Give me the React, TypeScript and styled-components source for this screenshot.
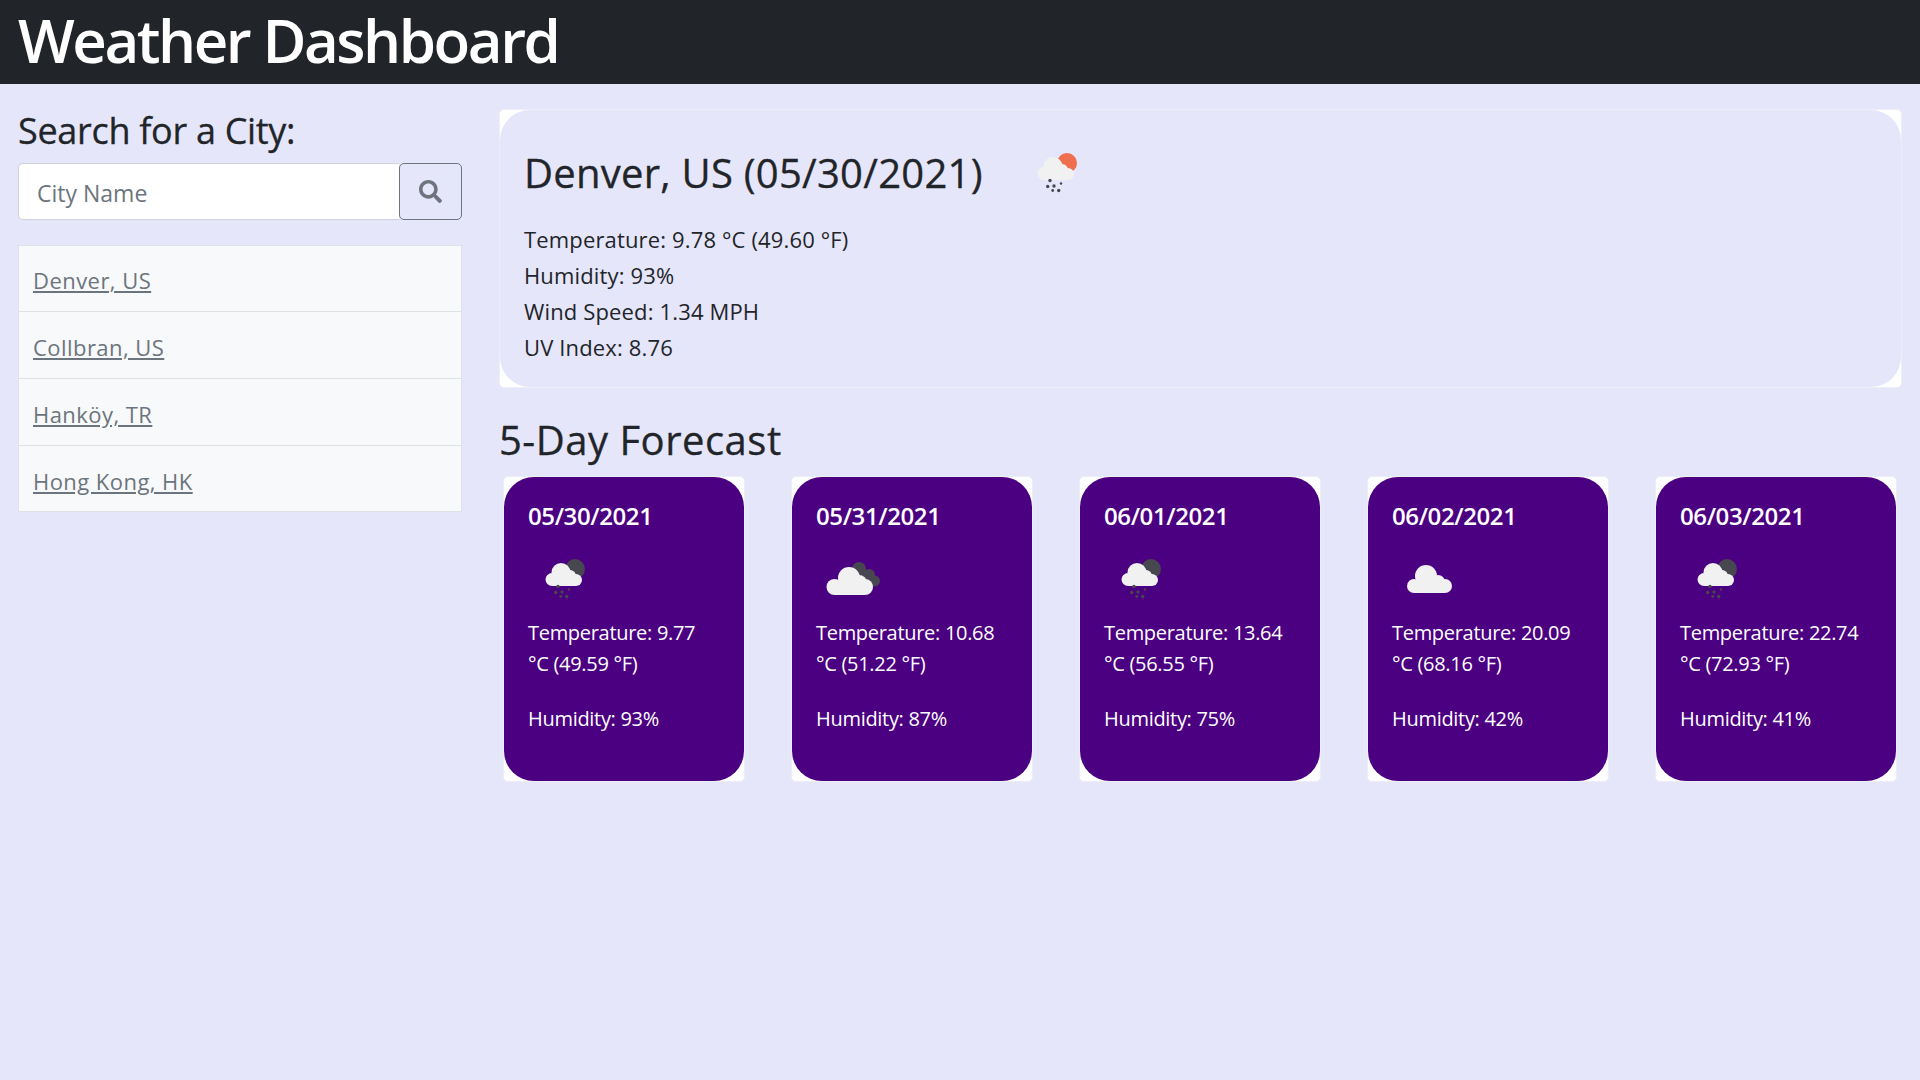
import { FC } from "react";
import styled, { createGlobalStyle } from "styled-components";
import { FaSearch } from "react-icons/fa";

const GlobalStyle = createGlobalStyle`
  html, body {
    margin: 0;
    padding: 0;
    background: #e6e6fa;
  }
  * {
    box-sizing: border-box;
  }
`;

const Page = styled.div`
  min-height: 1080px;
  background: #e6e6fa;
  color: #212529;
  font-family: "Open Sans", "Noto Sans", sans-serif;
`;

const Header = styled.header`
  height: 84px;
  background: #212529;
  padding: 0 18px 5px;
  display: flex;
  align-items: center;
`;

const Title = styled.h1`
  margin: 0;
  color: #fff;
  font-size: 60px;
  font-weight: 600;
  line-height: 1;
  letter-spacing: -2.45px;
`;

const Columns = styled.div`
  display: grid;
  grid-template-columns: 480px 1fr;
`;

const Sidebar = styled.aside`
  padding: 25px 18px 0;
`;

const SearchLabel = styled.h3`
  margin: 0 0 10px;
  font-size: 36px;
  font-weight: 500;
  line-height: 44px;
  letter-spacing: -0.3px;
  -webkit-text-stroke: 0.3px #212529;
`;

const SearchGroup = styled.form`
  display: flex;
  height: 58px;
  margin-bottom: 24px;
`;

const SearchInput = styled.input`
  flex: 1;
  min-width: 0;
  height: 57px;
  padding: 2px 18px 0;
  background: #fff;
  border: 1px solid #ced4da;
  border-right: 0;
  border-radius: 5px 0 0 5px;
  color: #212529;
  font: 400 23px "Open Sans", sans-serif;
  &::placeholder {
    color: #6c757d;
    opacity: 1;
  }
`;

const SearchButton = styled.button`
  width: 63px;
  height: 57px;
  display: flex;
  align-items: center;
  justify-content: center;
  padding: 0;
  background: transparent;
  border: 1px solid #6c757d;
  border-radius: 5px;
  color: #6c757d;
  font-size: 23px;
`;

const CityList = styled.ul`
  list-style: none;
  margin: 0;
  padding: 0;
  border: 1px solid #dee2e6;
  background: #f8f9fa;
`;

const CityItem = styled.li`
  height: 67px;
  padding: 16px 14px 0;
  font-size: 22px;
  line-height: 36px;
  letter-spacing: 0.45px;
  &:first-child {
    height: 65px;
  }
  & + & {
    padding-top: 17px;
    border-top: 1px solid #dee2e6;
  }
  &:last-child {
    height: 66px;
  }
`;

const CityLink = styled.a`
  color: #6c757d;
  text-decoration: underline;
`;

const Main = styled.main`
  padding: 25px 18px 0 19px;
`;

const TodayCard = styled.section`
  height: 279px;
  background: #fff;
  border: 1px solid #eeeef6;
  border-radius: 5px;
`;

const TodayInner = styled.div`
  height: 100%;
  padding: 24px 24px 0;
  background: #e6e6fa;
  border-radius: 30px;
`;

const TodayHeading = styled.div`
  display: flex;
  align-items: center;
  height: 70px;
  margin-bottom: 17px;
`;

const CityTitle = styled.h2`
  margin: 7px 37px 0 0;
  font-size: 40px;
  font-weight: 500;
  line-height: 48px;
  letter-spacing: 0.25px;
  -webkit-text-stroke: 0.3px #212529;
`;

const StatLine = styled.p`
  margin: 0;
  font-size: 22px;
  line-height: 36px;
  letter-spacing: 0.15px;
`;

const ForecastTitle = styled.h2`
  margin: 28px 0 12px;
  font-size: 40px;
  font-weight: 500;
  line-height: 48px;
  letter-spacing: 0.5px;
  -webkit-text-stroke: 0.3px #212529;
`;

const ForecastRow = styled.div`
  display: flex;
  justify-content: space-between;
  padding: 0 5px 0 4px;
`;

const DayCard = styled.article`
  width: 242px;
  height: 306px;
  background: #fff;
  border: 1px solid #eeeef6;
  border-radius: 5px;
`;

const DayInner = styled.div`
  height: 100%;
  padding: 24px 30px 0 24px;
  background: #4b0082;
  color: #fff;
  border-radius: 30px;
`;

const DayDate = styled.h5`
  margin: 0 0 10px;
  font-size: 24px;
  font-weight: 600;
  line-height: 29px;
  letter-spacing: -0.4px;
`;

const DayIcon = styled.div`
  margin-bottom: 7px;
`;

const DayText = styled.p`
  margin: 0 0 24px;
  font-size: 20px;
  line-height: 31px;
  letter-spacing: -0.3px;
`;

const IconSvg = styled.svg`
  display: block;
  flex: none;
  width: 70px;
  height: 70px;
`;

type IconKind = "rainSun" | "rainMoon" | "broken" | "cloud";

const RainDots: FC = () => (
  <g fill="#47474f">
    <circle cx="30" cy="46.500" r="1.7" />
    <circle cx="27.700" cy="52.500" r="1.7" />
    <circle cx="34" cy="52" r="1.7" />
    <circle cx="41" cy="49.500" r="1.2" />
    <circle cx="32.700" cy="56.500" r="1.4" />
    <circle cx="38.700" cy="56.500" r="1.7" />
  </g>
);

const WeatherIcon: FC<{ kind: IconKind }> = ({ kind }) => {
  if (kind === "cloud") {
    return (
      <IconSvg viewBox="0 0 70 70">
        <g fill="#f1f1f1">
          <circle cx="22" cy="46" r="7" />
          <circle cx="34" cy="36" r="11" />
          <circle cx="46" cy="42" r="7" />
          <circle cx="53" cy="46" r="7" />
          <rect x="22" y="42" width="31" height="11" />
        </g>
      </IconSvg>
    );
  }
  if (kind === "broken") {
    return (
      <IconSvg viewBox="0 0 70 70">
        <g fill="#47474f">
          <circle cx="43" cy="29" r="7" />
          <circle cx="53" cy="35" r="6" />
          <circle cx="58.500" cy="41" r="5.500" />
          <rect x="42" y="32" width="14" height="14" />
        </g>
        <g fill="#f1f1f1">
          <circle cx="18.500" cy="47" r="8" />
          <circle cx="33" cy="38" r="11" />
          <circle cx="43" cy="43" r="8" />
          <circle cx="49" cy="47" r="8" />
          <rect x="18.500" y="44" width="30.500" height="11" />
        </g>
      </IconSvg>
    );
  }
  return (
    <IconSvg viewBox="0 0 70 70">
      <circle cx="47" cy="29" r="10" fill={kind === "rainSun" ? "#ee6e4d" : "#47474f"} />
      <g fill="#f1f1f1">
        <circle cx="24" cy="39.500" r="6.500" />
        <circle cx="33" cy="32.500" r="9.500" />
        <circle cx="42" cy="36" r="6" />
        <circle cx="48" cy="40" r="6" />
        <rect x="24" y="38" width="24" height="8" />
      </g>
      <RainDots />
    </IconSvg>
  );
};

const cities = ["Denver, US", "Collbran, US", "Hanköy, TR", "Hong Kong, HK"];

const forecast: { date: string; icon: IconKind; c: string; f: string; humidity: number }[] = [
  { date: "05/30/2021", icon: "rainMoon", c: "9.77", f: "49.59", humidity: 93 },
  { date: "05/31/2021", icon: "broken", c: "10.68", f: "51.22", humidity: 87 },
  { date: "06/01/2021", icon: "rainMoon", c: "13.64", f: "56.55", humidity: 75 },
  { date: "06/02/2021", icon: "cloud", c: "20.09", f: "68.16", humidity: 42 },
  { date: "06/03/2021", icon: "rainMoon", c: "22.74", f: "72.93", humidity: 41 },
];

export default function App() {
  return (
    <Page>
      <GlobalStyle />
      <Header>
        <Title>Weather Dashboard</Title>
      </Header>
      <Columns>
        <Sidebar>
          <SearchLabel>Search for a City:</SearchLabel>
          <SearchGroup>
            <SearchInput placeholder="City Name" />
            <SearchButton type="button">
              <FaSearch />
            </SearchButton>
          </SearchGroup>
          <CityList>
            {cities.map((city) => (
              <CityItem key={city}>
                <CityLink href="#">{city}</CityLink>
              </CityItem>
            ))}
          </CityList>
        </Sidebar>
        <Main>
          <TodayCard>
            <TodayInner>
              <TodayHeading>
                <CityTitle>Denver, US (05/30/2021)</CityTitle>
                <WeatherIcon kind="rainSun" />
              </TodayHeading>
              <StatLine>Temperature: 9.78 °C (49.60 °F)</StatLine>
              <StatLine>Humidity: 93%</StatLine>
              <StatLine>Wind Speed: 1.34 MPH</StatLine>
              <StatLine>UV Index: 8.76</StatLine>
            </TodayInner>
          </TodayCard>
          <ForecastTitle>5-Day Forecast</ForecastTitle>
          <ForecastRow>
            {forecast.map((day) => (
              <DayCard key={day.date}>
                <DayInner>
                  <DayDate>{day.date}</DayDate>
                  <DayIcon>
                    <WeatherIcon kind={day.icon} />
                  </DayIcon>
                  <DayText>
                    Temperature: {day.c} °C ({day.f} °F)
                  </DayText>
                  <DayText>Humidity: {day.humidity}%</DayText>
                </DayInner>
              </DayCard>
            ))}
          </ForecastRow>
        </Main>
      </Columns>
    </Page>
  );
}
